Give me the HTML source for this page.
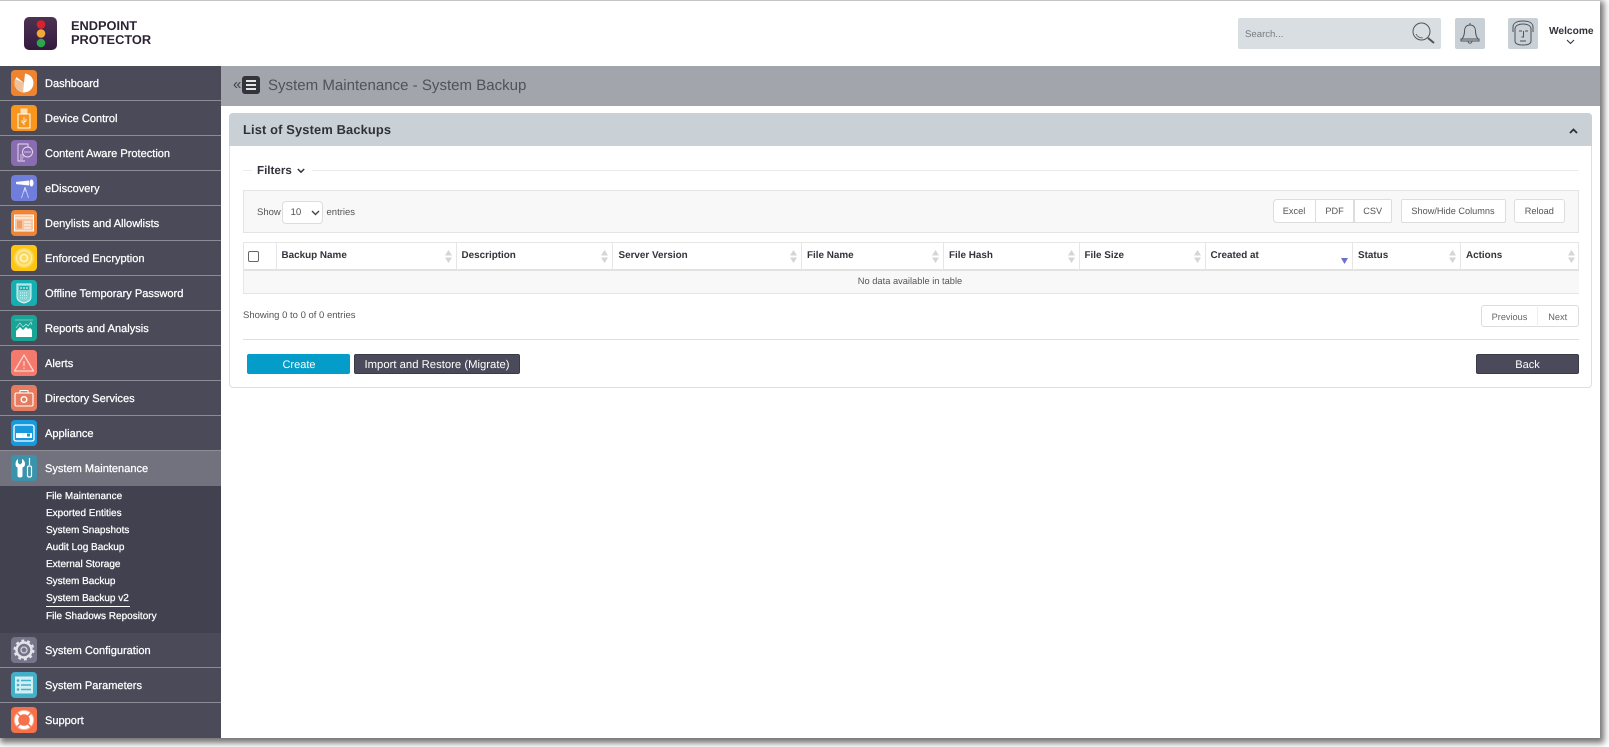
<!DOCTYPE html>
<html><head><meta charset="utf-8"><title>System Backup</title>
<style>
*{box-sizing:border-box}
html,body{margin:0;padding:0;width:1609px;height:747px;overflow:hidden;background:#fff;font-family:"Liberation Sans",sans-serif;text-rendering:geometricPrecision}
.a{position:absolute}
#app{position:absolute;left:0;top:0;width:1600px;height:738px;background:#fff;border-top:1px solid #c4c4c4;box-shadow:2px 3px 6px 2px rgba(0,0,0,.55)}
#wrap{position:absolute;left:0;top:0;width:1609px;height:747px;filter:blur(.35px)}
.side{position:absolute;left:0;top:66px;width:220.5px;height:672px;background:#4b4a59}
.it{position:absolute;left:0;width:220.5px;height:35px;border-bottom:1px solid #8c8c96;color:#fff;font-size:11.05px;line-height:36.5px;padding-left:45px;-webkit-text-stroke:.25px #fff}
.it svg{position:absolute;left:11px;top:4px;width:26px;height:26px}
.sub{position:absolute;left:46px;color:#fff;font-size:10px;line-height:14px;white-space:nowrap;-webkit-text-stroke:.25px #fff}
.t{position:absolute;white-space:nowrap}
.th{position:absolute;top:242.5px;height:27px;border-right:1px solid #e6e6e6;font-size:9.9px;font-weight:bold;color:#33343c;line-height:25px;padding-left:5px;white-space:nowrap}
.sort{position:absolute;right:4px;top:7px;width:7px;height:13px}
.btn{position:absolute;background:#fff;border:1px solid #ddd;color:#555;font-size:9.2px;text-align:center;white-space:nowrap}
</style></head><body>
<div id="wrap">
<div id="app"></div>

<!-- header -->
<svg class="a" style="left:24px;top:17px" width="33" height="33" viewBox="0 0 33 33"><defs><linearGradient id="lg" x1="0" y1="0" x2="0" y2="1"><stop offset="0" stop-color="#4d3350"/><stop offset="1" stop-color="#33193f"/></linearGradient></defs><rect width="33" height="33" rx="5" fill="url(#lg)"/><circle cx="17" cy="7.500" r="4.300" fill="#d8232f"/><circle cx="17" cy="16.500" r="4.300" fill="#eda93a"/><circle cx="17" cy="26" r="4.300" fill="#2ea44f"/></svg>
<div class="t" style="left:71px;top:19px;font-size:12.8px;font-weight:bold;line-height:14px;color:#2b2233">ENDPOINT<br>PROTECTOR</div>

<div class="a" style="left:1238px;top:18px;width:203px;height:31px;background:#d8dee2;border-radius:2px"></div>
<div class="t" style="left:1245px;top:28.500px;font-size:9.6px;line-height:12px;color:#757b80">Search...</div>
<svg class="a" style="left:1410px;top:20px" width="26" height="26" viewBox="0 0 26 26" fill="none" stroke="#50555a"><circle cx="11.5" cy="11.5" r="8.5" stroke-width="1"/><path d="M6 14q2 4 7 4" stroke-width=".8"/><path d="M18 18l6 5" stroke-width="2"/></svg>
<div class="a" style="left:1455px;top:18px;width:30px;height:31px;background:#c9d0d6;border-radius:2px"></div>
<svg class="a" style="left:1459px;top:22px" width="22" height="23" viewBox="0 0 22 23" fill="none" stroke="#4d5257" stroke-width="1"><path d="M11 1v2M11 3c-4 0-5.500 3-5.500 6 0 4-1 6-2.500 8h16c-1.500-2-2.500-4-2.500-8 0-3-1.500-6-5.500-6zM2 17h18v2H2zM9 19c0 3 4 3 4 0"/></svg>
<div class="a" style="left:1508px;top:18px;width:30px;height:31px;background:#c9d0d6;border-radius:2px"></div>
<svg class="a" style="left:1511px;top:20px" width="24" height="27" viewBox="0 0 24 27" fill="none" stroke="#4d5257" stroke-width="1"><path d="M2 12V7c0-4 4-6 10-6s10 2 10 6v5"/><path d="M4 9c0-3 3-5 8-5s8 2 8 5v12c0 3-3 4-8 4s-8-1-8-4z"/><path d="M8 11h3M14 11h3M12.500 11v6h-2M9 21h6"/></svg>
<div class="t" style="left:1549px;top:25.500px;font-size:10.2px;font-weight:bold;line-height:12px;color:#33343c">Welcome</div>
<svg class="a" style="left:1566px;top:39px" width="9" height="6" viewBox="0 0 9 6" fill="none" stroke="#33343c" stroke-width="1.100"><path d="M1 1l3.500 3.500L8 1"/></svg>

<!-- sidebar -->
<div class="side"></div>

<div class="it" style="top:66px"><svg viewBox="0 0 26 26"><rect width="26" height="26" rx="4" fill="#ee8330"/><circle cx="13" cy="13" r="9.500" fill="#fff"/><path d="M13 13L4.500 9A9.500 9.500 0 0 0 12 22.500z" fill="#efc29b"/><path d="M13 13L5.500 7A9.500 9.500 0 0 1 14 3.500z" fill="#ee8330"/></svg>Dashboard</div>

<div class="it" style="top:101px"><svg viewBox="0 0 26 26"><rect width="26" height="26" rx="4" fill="#f7951d"/><rect x="9.500" y="3.500" width="7" height="5.500" fill="#fff" opacity=".7"/><rect x="7" y="9" width="12" height="14" fill="none" stroke="#fff"/><path d="M13 12v8M11 15v2l2 1.500M15 14v2l-2 1" stroke="#fff" stroke-width=".8" fill="none"/></svg>Device Control</div>

<div class="it" style="top:136px"><svg viewBox="0 0 26 26"><rect width="26" height="26" rx="4" fill="#8a6cb0"/><path d="M7 4h10v3M7 4v17h7" fill="none" stroke="#e9e2f2" stroke-width=".9"/><circle cx="16.500" cy="12" r="5" fill="#8a6cb0" stroke="#e9e2f2" stroke-width=".9"/><path d="M13 12h7M9 15h4M9 17h4M9 19h3" stroke="#e9e2f2" stroke-width=".8"/></svg>Content Aware Protection</div>

<div class="it" style="top:171px"><svg viewBox="0 0 26 26"><rect width="26" height="26" rx="4" fill="#6f7ddb"/><path d="M4 7l14-1.500v5L4 9z" fill="#fff" opacity=".95"/><rect x="3" y="6.500" width="2" height="3" fill="#6f7ddb"/><ellipse cx="20.500" cy="8" rx="2.300" ry="3.700" fill="#fff" stroke="#6f7ddb" stroke-width=".5"/><path d="M14 12l-3.500 11M14 12l3.500 11M14 12v5" stroke="#dfe3fa" stroke-width=".7" fill="none"/></svg>eDiscovery</div>

<div class="it" style="top:206px"><svg viewBox="0 0 26 26"><rect width="26" height="26" rx="4" fill="#ee8438"/><rect x="3.500" y="5" width="19" height="16" fill="#f6c7a2" stroke="#fff"/><path d="M3.500 8h19" stroke="#fff"/><rect x="6" y="10.500" width="5" height="8" fill="#ee8438" opacity=".6"/><path d="M13 12h7M13 15h7M13 18h7" stroke="#fff" stroke-width="1"/></svg>Denylists and Allowlists</div>

<div class="it" style="top:241px"><svg viewBox="0 0 26 26"><rect width="26" height="26" rx="4" fill="#fdc512"/><circle cx="13" cy="13" r="10" fill="#fbd95e"/><circle cx="13" cy="13" r="7.500" fill="none" stroke="#fff0b4"/><circle cx="13" cy="13" r="3.500" fill="none" stroke="#fff4c5" stroke-width="1.600"/></svg>Enforced Encryption</div>

<div class="it" style="top:276px"><svg viewBox="0 0 26 26"><rect width="26" height="26" rx="4" fill="#16aeb0"/><path d="M6 4h14v13c0 3-3 5-7 6-4-1-7-3-7-6z" fill="#7fd3d2" stroke="#e6f8f8"/><rect x="8" y="6" width="10" height="4" fill="#16aeb0"/><path d="M9 8h8" stroke="#fff" stroke-dasharray="2 1"/><path d="M9 13h8M9 15.500h8M9 18h8" stroke="#d8f3f3" stroke-dasharray="1 1"/></svg>Offline Temporary Password</div>

<div class="it" style="top:311px"><svg viewBox="0 0 26 26"><rect width="26" height="26" rx="4" fill="#18a595"/><path d="M4 5h18" stroke="#8fd6cd" stroke-width=".8"/><path d="M5 22V16l4-4 3 3 3-3 2 2 2-1 2 2v7z" fill="#fff"/><path d="M5 13l4-5 3 4 3-3 2 2 3-4 1 3" stroke="#d5f0ec" fill="none" stroke-width=".6"/></svg>Reports and Analysis</div>

<div class="it" style="top:346px"><svg viewBox="0 0 26 26"><rect width="26" height="26" rx="4" fill="#f47a6e"/><path d="M13 5L3.500 21h19z" fill="none" stroke="#fcd2cc" stroke-width="1.300" stroke-linejoin="round"/><path d="M13 11v5M13 17.500v1.500" stroke="#fcd2cc" stroke-width="1.300"/></svg>Alerts</div>

<div class="it" style="top:381px"><svg viewBox="0 0 26 26"><rect width="26" height="26" rx="4" fill="#e57c60"/><rect x="4" y="8" width="18" height="13" rx="1.500" fill="none" stroke="#fff" stroke-width="1.100"/><path d="M9 8V5.500h8V8" fill="none" stroke="#fff"/><circle cx="13" cy="14.500" r="2.800" fill="none" stroke="#fff" stroke-width="1.400"/></svg>Directory Services</div>

<div class="it" style="top:416px"><svg viewBox="0 0 26 26"><rect width="26" height="26" rx="4" fill="#1799dd"/><rect x="3" y="5" width="20" height="16" rx="2" fill="none" stroke="#fff" stroke-width="1.300"/><rect x="5" y="13" width="16" height="5" fill="#fff"/><rect x="16" y="13.500" width="3" height="3" fill="#1799dd"/></svg>Appliance</div>

<div class="it" style="top:451px;background:#72727e;border:0"><svg viewBox="0 0 26 26"><rect width="26" height="26" rx="4" fill="#3b93ab"/><path d="M5 4v4l2 1.500L9 8V4c2 1 3 3 3 5 0 2-1 3-2.500 3.500V21c0 2-5 2-5 0v-8.500C3 12 2.500 10.500 2.500 9 2.500 7 3.500 5 5 4z" fill="#fff" transform="translate(2 0)"/><path d="M18.500 3v7" stroke="#fff" stroke-width="1.200"/><rect x="16.500" y="11" width="4" height="11" rx="1.500" fill="none" stroke="#fff" stroke-width="1.200"/></svg>System Maintenance</div>

<div class="a" style="left:0;top:486px;width:220.5px;height:147px;background:#41414f"></div>
<div class="sub" style="top:490px">File Maintenance</div>
<div class="sub" style="top:507px">Exported Entities</div>
<div class="sub" style="top:524px">System Snapshots</div>
<div class="sub" style="top:541px">Audit Log Backup</div>
<div class="sub" style="top:558px">External Storage</div>
<div class="sub" style="top:575px">System Backup</div>
<div class="sub" style="top:592px;border-bottom:1px solid #fff;height:14.5px;padding-right:1px">System Backup v2</div>
<div class="sub" style="top:609.500px">File Shadows Repository</div>

<div class="it" style="top:633px"><svg viewBox="0 0 26 26"><rect width="26" height="26" rx="4" fill="#75758a"/><circle cx="13" cy="13" r="7.500" fill="none" stroke="#e3e3ea" stroke-width="2.500"/><circle cx="13" cy="13" r="9.500" fill="none" stroke="#e3e3ea" stroke-width="2" stroke-dasharray="3 2.970"/><circle cx="13" cy="13" r="3" fill="none" stroke="#d0d0da" stroke-width="1.300"/></svg>System Configuration</div>

<div class="it" style="top:668px"><svg viewBox="0 0 26 26"><rect width="26" height="26" rx="4" fill="#41b0c8"/><rect x="4" y="4.500" width="18" height="17" fill="#d2eef4"/><path d="M10 8.500h10M10 13h10M10 17.500h10" stroke="#41b0c8" stroke-width="1.500"/><circle cx="7" cy="8.500" r="1.300" fill="#41b0c8"/><circle cx="7" cy="13" r="1.300" fill="#41b0c8"/><circle cx="7" cy="17.500" r="1.300" fill="#41b0c8"/></svg>System Parameters</div>

<div class="it" style="top:703px;border:0"><svg viewBox="0 0 26 26"><rect width="26" height="26" rx="4" fill="#f6704a"/><circle cx="13" cy="13" r="7.500" fill="none" stroke="#fff" stroke-width="3.500"/><circle cx="13" cy="13" r="9.700" fill="none" stroke="#fbc6b3" stroke-width=".7"/><path d="M6 6l3 3M20 6l-3 3M6 20l3-3M20 20l-3-3" stroke="#f6704a" stroke-width="1.500"/></svg>Support</div>

<!-- title bar -->
<div class="a" style="left:220.5px;top:66px;width:1379.5px;height:40px;background:#a2a5ab"></div>
<div class="t" style="left:233px;top:76px;font-size:15px;line-height:18px;color:#3f4048">«</div>
<svg class="a" style="left:242px;top:76px" width="18" height="18" viewBox="0 0 18 18"><rect width="18" height="18" rx="3" fill="#33343b"/><path d="M4 5h10M4 9h10M4 13h10" stroke="#e4e5e7" stroke-width="2"/></svg>
<div class="t" style="left:268px;top:75.500px;font-size:15.05px;line-height:20px;color:#50525c">System Maintenance - System Backup</div>

<!-- panel -->
<div class="a" style="left:229px;top:113px;width:1363px;height:275px;background:#fff;border:1px solid #dcdfe2;border-radius:4px"></div>
<div class="a" style="left:229px;top:113px;width:1363px;height:33px;background:#c9d0d6;border-radius:4px 4px 0 0"></div>
<div class="t" style="left:243px;top:122px;font-size:12.85px;font-weight:bold;line-height:16px;color:#2f3138;letter-spacing:.15px">List of System Backups</div>
<svg class="a" style="left:1569px;top:128px" width="9" height="6" viewBox="0 0 9 6" fill="none" stroke="#2f3138" stroke-width="1.800"><path d="M1 5l3.500-3.500L8 5"/></svg>

<!-- filters -->
<div class="a" style="left:243px;top:169.500px;width:1336px;height:1px;background:#ececec"></div>
<div class="a" style="left:252px;top:160px;width:60px;height:20px;background:#fff"></div>
<div class="t" style="left:257px;top:164px;font-size:11.6px;font-weight:bold;line-height:14px;color:#33343c">Filters</div>
<svg class="a" style="left:297px;top:168px" width="8" height="6" viewBox="0 0 8 6" fill="none" stroke="#33343c" stroke-width="1.500"><path d="M.8 1l3.200 3.200L7.200 1"/></svg>

<!-- toolbar -->
<div class="a" style="left:243px;top:190px;width:1336px;height:42.500px;background:#f8f8f8;border:1px solid #e4e4e4"></div>
<div class="t" style="left:257px;top:206.500px;font-size:9.500px;line-height:12px;color:#555">Show</div>
<div class="a" style="left:282px;top:200.500px;width:41px;height:23px;background:#fff;border:1px solid #ddd;border-radius:4px"></div>
<div class="t" style="left:290.500px;top:206.500px;font-size:9.700px;line-height:12px;color:#555">10</div>
<svg class="a" style="left:310.500px;top:210px" width="9" height="6" viewBox="0 0 9 6" fill="none" stroke="#444" stroke-width="1.400"><path d="M1 1l3.500 3.500L8 1"/></svg>
<div class="t" style="left:326.500px;top:206.500px;font-size:9.500px;line-height:12px;color:#555">entries</div>

<div class="btn" style="left:1272.500px;top:199px;width:43px;height:23.500px;line-height:23px;border-radius:4px 0 0 4px">Excel</div>
<div class="btn" style="left:1315px;top:199px;width:39px;height:23.500px;line-height:23px">PDF</div>
<div class="btn" style="left:1353.500px;top:199px;width:38.500px;height:23.500px;line-height:23px;border-radius:0 2px 2px 0">CSV</div>
<div class="btn" style="left:1400.500px;top:199px;width:105px;height:23.500px;line-height:23px;border-radius:2px">Show/Hide Columns</div>
<div class="btn" style="left:1514px;top:199px;width:50.500px;height:23.500px;line-height:23px;border-radius:3px">Reload</div>

<!-- table -->
<div class="a" style="left:243px;top:242px;width:1336px;height:51.500px;border:1px solid #e6e6e6;background:#fff"></div>
<div class="a" style="left:243.500px;top:269px;width:1335px;height:24px;background:#f8f8f8;border-top:2px solid #e2e2e2"></div>
<div class="a" style="left:248px;top:250.500px;width:11px;height:11px;border:1px solid #666;border-radius:2px;background:#fff"></div>
<div class="th" style="left:243.500px;width:33px"></div>
<div class="th" style="left:276.500px;width:180px">Backup Name<svg class="sort" viewBox="0 0 7 13"><path d="M3.500 0L7 5.500H0zM3.500 13L0 7.500h7z" fill="#d5d5d5"/></svg></div>
<div class="th" style="left:456.500px;width:156.500px">Description<svg class="sort" viewBox="0 0 7 13"><path d="M3.500 0L7 5.500H0zM3.500 13L0 7.500h7z" fill="#d5d5d5"/></svg></div>
<div class="th" style="left:613px;width:189px;padding-left:5.500px">Server Version<svg class="sort" viewBox="0 0 7 13"><path d="M3.500 0L7 5.500H0zM3.500 13L0 7.500h7z" fill="#d5d5d5"/></svg></div>
<div class="th" style="left:802px;width:142px">File Name<svg class="sort" viewBox="0 0 7 13"><path d="M3.500 0L7 5.500H0zM3.500 13L0 7.500h7z" fill="#d5d5d5"/></svg></div>
<div class="th" style="left:944px;width:135.500px">File Hash<svg class="sort" viewBox="0 0 7 13"><path d="M3.500 0L7 5.500H0zM3.500 13L0 7.500h7z" fill="#d5d5d5"/></svg></div>
<div class="th" style="left:1079.500px;width:126px">File Size<svg class="sort" viewBox="0 0 7 13"><path d="M3.500 0L7 5.500H0zM3.500 13L0 7.500h7z" fill="#d5d5d5"/></svg></div>
<div class="th" style="left:1205.500px;width:147.500px">Created at<svg class="a" style="right:4px;top:15px" width="7" height="6" viewBox="0 0 7 6"><path d="M0 0h7L3.500 6z" fill="#6a70cf"/></svg></div>
<div class="th" style="left:1353px;width:108px">Status<svg class="sort" viewBox="0 0 7 13"><path d="M3.500 0L7 5.500H0zM3.500 13L0 7.500h7z" fill="#d5d5d5"/></svg></div>
<div class="th" style="left:1461px;width:117.500px;border-right:0">Actions<svg class="sort" viewBox="0 0 7 13"><path d="M3.500 0L7 5.500H0zM3.500 13L0 7.500h7z" fill="#d5d5d5"/></svg></div>
<div class="t" style="left:799px;top:275px;width:222px;text-align:center;font-size:9.300px;line-height:12px;color:#555">No data available in table</div>

<div class="t" style="left:243px;top:310px;font-size:9.500px;line-height:12px;color:#555">Showing 0 to 0 of 0 entries</div>

<div class="btn" style="left:1481px;top:304.500px;width:57px;height:22.500px;line-height:22px;border-radius:3px 0 0 3px;color:#666;border-right:1px solid #eee">Previous</div>
<div class="btn" style="left:1537.500px;top:304.500px;width:41.500px;height:22.500px;line-height:22px;border-radius:0 3px 3px 0;border-left:0;color:#666">Next</div>

<div class="a" style="left:243px;top:339px;width:1336px;height:1px;background:#dedede"></div>

<div class="a" style="left:247px;top:354px;width:103px;height:20px;background:#049cc8;border-radius:2px;color:#fff;font-size:11px;line-height:22px;text-align:center;padding-left:1px">Create</div>
<div class="a" style="left:354px;top:354px;width:166px;height:20px;background:#4a4a5a;border-radius:2px;border:1px solid #3a3a48;color:#fff;font-size:11.3px;line-height:20px;text-align:center;white-space:nowrap">Import and Restore (Migrate)</div>
<div class="a" style="left:1476px;top:354px;width:103px;height:20px;background:#4a4a5a;border-radius:2px;border:1px solid #3a3a48;color:#fff;font-size:11px;line-height:20px;text-align:center">Back</div>
</div>
</body></html>
